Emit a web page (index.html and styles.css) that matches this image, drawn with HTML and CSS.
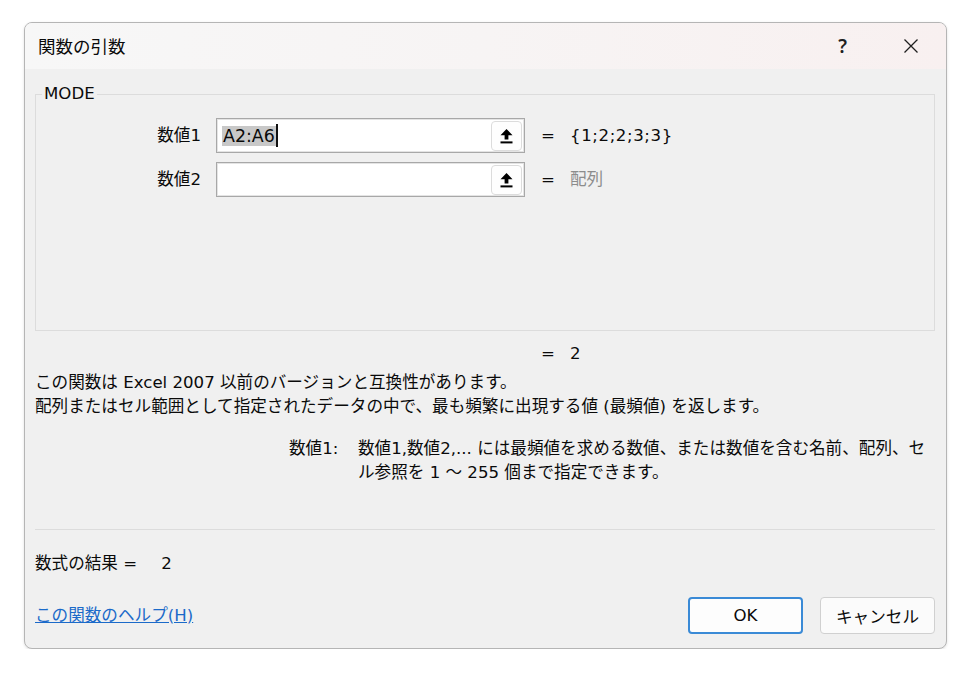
FILE: index.html
```
<!DOCTYPE html>
<html lang="ja">
<head>
<meta charset="utf-8">
<title>関数の引数</title>
<link rel="stylesheet" href="styles.css">
</head>
<body>
<div class="window">
  <div class="titlebar">
    <span class="title">関数の引数</span>
    <div class="tb-buttons">
      <span class="tb-help">?</span>
      <svg class="tb-close" width="16" height="16" viewBox="0 0 16 16"><path d="M1.5 1.5 L14.5 14.5 M14.5 1.5 L1.5 14.5" stroke="#1f1f1f" stroke-width="1.3" fill="none"/></svg>
    </div>
  </div>
  <div class="content">
    <div class="group">
      <span class="legend">MODE</span>
      <div class="args">
        <span class="arg-label">数値1</span>
        <div class="input"><span class="sel">A2:A6</span><span class="caret"></span>
          <span class="ref-btn"><svg width="13" height="16" viewBox="0 0 13 16"><polygon points="6.5,1 12.5,7.2 8.4,7.2 8.4,11.6 4.6,11.6 4.6,7.2 0.5,7.2" fill="#000"/><rect x="0.5" y="13.4" width="12" height="2" fill="#000"/></svg></span>
        </div>
        <span class="eq">=</span>
        <span class="val">{1;2;2;3;3}</span>

        <span class="arg-label">数値2</span>
        <div class="input">
          <span class="ref-btn"><svg width="13" height="16" viewBox="0 0 13 16"><polygon points="6.5,1 12.5,7.2 8.4,7.2 8.4,11.6 4.6,11.6 4.6,7.2 0.5,7.2" fill="#000"/><rect x="0.5" y="13.4" width="12" height="2" fill="#000"/></svg></span>
        </div>
        <span class="eq">=</span>
        <span class="val hint">配列</span>
      </div>
    </div>

    <div class="result-line"><span class="eq">=</span><span class="val">2</span></div>

    <p class="desc">この関数は Excel 2007 以前のバージョンと互換性があります。<br>配列またはセル範囲として指定されたデータの中で、最も頻繁に出現する値 (最頻値) を返します。</p>

    <div class="argdesc">
      <span class="argname">数値1:</span>
      <span class="argtext">数値1,数値2,... には最頻値を求める数値、または数値を含む名前、配列、セ<br>ル参照を 1 ～ 255 個まで指定できます。</span>
    </div>

    <div class="sep"></div>

    <div class="formula"><span>数式の結果 =</span><span class="formula-val">2</span></div>

    <div class="footer">
      <a class="help-link" href="#">この関数のヘルプ(H)</a>
      <div class="btns">
        <button class="btn ok">OK</button>
        <button class="btn">キャンセル</button>
      </div>
    </div>
  </div>
</div>
</body>
</html>
```
FILE: styles.css
```
* { box-sizing: border-box; }
html, body { margin: 0; padding: 0; background: #ffffff; }
body {
  font-family: "DejaVu Sans", "Noto Sans CJK JP", sans-serif;
  font-size: 16.6px;
  color: #0a0a0a;
}
.window {
  width: 923px;
  height: 627px;
  margin: 22px 0 0 24px;
  border: 1px solid #b5b5b5;
  border-radius: 8px;
  background: #f0f0f0;
  overflow: hidden;
  box-shadow: 0 1px 3px rgba(0,0,0,0.12);
}
.titlebar {
  height: 46px;
  display: flex;
  align-items: center;
  padding: 0 27px 0 13px;
  background: linear-gradient(90deg, #f7f7f7 0%, #f7f4f4 50%, #f8f0f0 100%);
}
.title { font-size: 17.5px; line-height: 20px; font-family: "Noto Sans CJK JP", sans-serif; }
.tb-buttons { margin-left: auto; display: flex; align-items: center; gap: 56px; }
.tb-help { font-size: 19px; line-height: 20px; font-weight: 600; font-family: "Noto Sans", sans-serif; color: #1f1f1f; }
.tb-close { display: block; }
.content { padding: 0 11px 0 10px; }
.group {
  position: relative;
  margin-top: 25px;
  height: 237px;
  border: 1px solid #dcdcdc;
  padding-top: 23px;
}
.legend {
  position: absolute;
  top: -11px;
  left: 6px;
  padding: 0 2px;
  background: #f0f0f0;
  line-height: 20px;
}
.args {
  display: grid;
  grid-template-columns: 180px 309px 45px 1fr;
  grid-auto-rows: 35px;
  row-gap: 9px;
  align-items: center;
}
.arg-label { text-align: right; padding-right: 15px; line-height: 20px; }
.input {
  height: 35px;
  background: #ffffff;
  border: 1px solid #a8a8a8;
  box-shadow: inset 0 0 0 1px #e4e4e4;
  display: flex;
  align-items: center;
  padding-left: 5px;
  padding-right: 2px;
}
.sel { background: #c8c8c8; line-height: 20px; padding: 0 1px; font-size: 17.4px; }
.caret { width: 2px; height: 23px; background: #111; }
.ref-btn {
  margin-left: auto;
  width: 31px;
  height: 30px;
  background: #fefefe;
  border: 1px solid #dcdcdc;
  border-radius: 4px;
  display: flex;
  align-items: center;
  justify-content: center;
}
.ref-btn svg { display: block; }
.eq { padding-left: 16px; line-height: 20px; }
.val { line-height: 20px; letter-spacing: 0.6px; }
.hint { color: #8c8c8c; letter-spacing: 0; }
.result-line {
  margin-top: 13px;
  padding-left: 506px;
  display: grid;
  grid-template-columns: 29px auto;
  line-height: 20px;
}
.result-line .eq { padding-left: 0; }
.desc { margin: 7px 0 0; line-height: 24px; }
.argdesc {
  margin-top: 18px;
  padding-left: 254px;
  display: grid;
  grid-template-columns: 69px auto;
  line-height: 24px;
}
.sep { margin-top: 44px; height: 1px; background: #dcdcdc; }
.formula { margin-top: 24px; line-height: 20px; display: flex; }
.formula-val { margin-left: 24px; }
.footer {
  margin-top: 23px;
  height: 37px;
  display: flex;
  align-items: center;
}
.help-link { color: #1b6ac9; text-decoration: underline; line-height: 20px; }
.btns { margin-left: auto; display: flex; gap: 17px; }
.btn {
  width: 115px;
  height: 37px;
  font-family: "DejaVu Sans", "Noto Sans CJK JP", sans-serif;
  font-size: 16.6px;
  color: #0a0a0a;
  background: #fbfbfb;
  border: 1px solid #d0d0d0;
  border-radius: 4px;
  padding: 0;
}
.btn.ok { border: 2px solid #3a8ad6; background: #fdfdfd; }
```
